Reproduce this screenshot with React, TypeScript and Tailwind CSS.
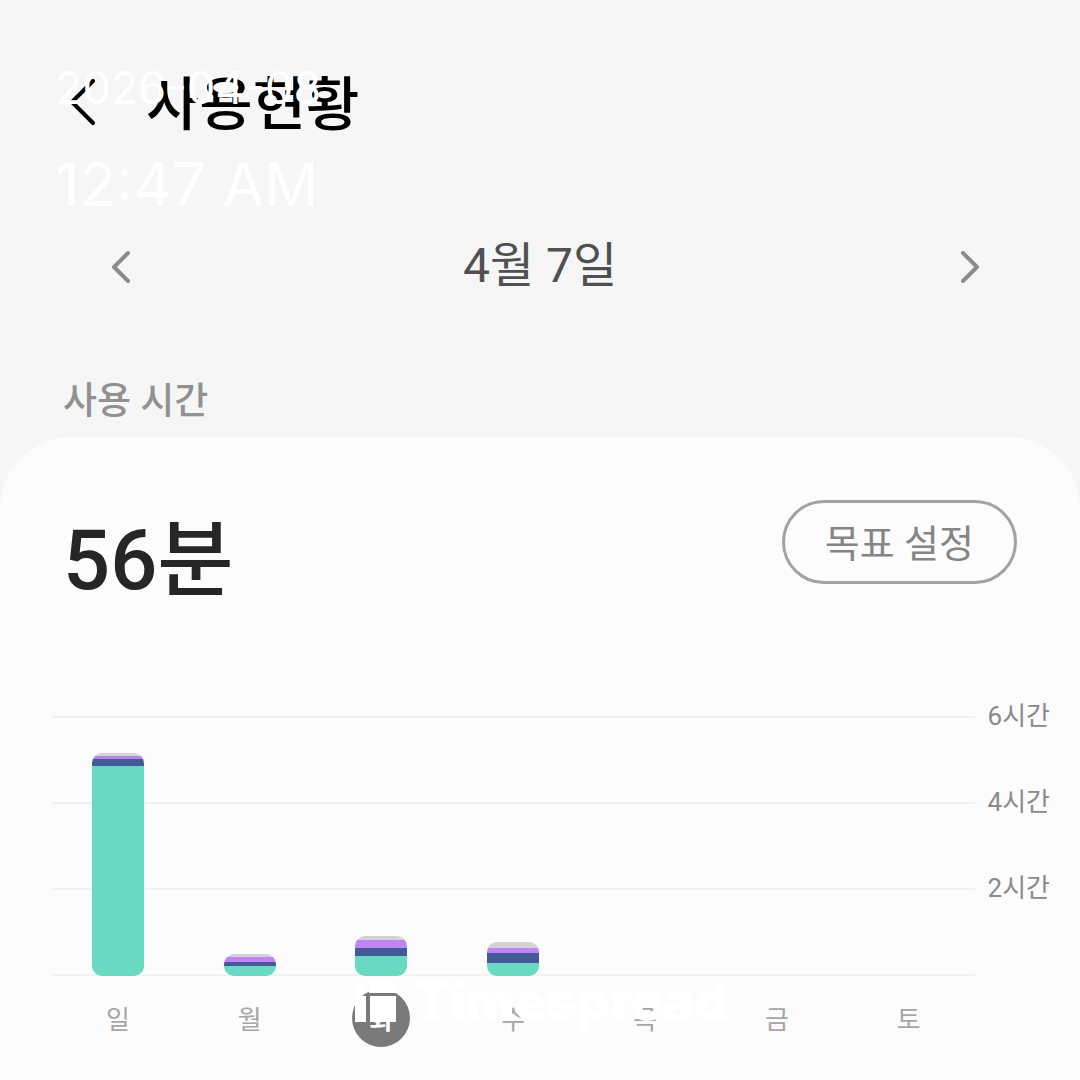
import React from 'react'

/* ── Chart data (segment heights in px, 43px per hour) ── */
type Segment = { size: number; className: string }
type Day = { label: string; segments: Segment[]; selected?: boolean }

const days: Day[] = [
  {
    label: '일',
    segments: [
      { size: 3, className: 'bg-[#d9d3dd]' },
      { size: 3, className: 'bg-[#b088dd]' },
      { size: 7, className: 'bg-[#425a98]' },
      { size: 210, className: 'bg-[#69d9c1]' },
    ],
  },
  {
    label: '월',
    segments: [
      { size: 3, className: 'bg-[#d3d3d3]' },
      { size: 5, className: 'bg-[#c084f5]' },
      { size: 4, className: 'bg-[#425a98]' },
      { size: 10, className: 'bg-[#69d9c1]' },
    ],
  },
  {
    label: '화',
    selected: true,
    segments: [
      { size: 4, className: 'bg-[#d3d3d3]' },
      { size: 8, className: 'bg-[#c084f5]' },
      { size: 8, className: 'bg-[#425a98]' },
      { size: 20, className: 'bg-[#69d9c1]' },
    ],
  },
  {
    label: '수',
    segments: [
      { size: 6, className: 'bg-[#d3d3d3]' },
      { size: 5, className: 'bg-[#c084f5]' },
      { size: 10, className: 'bg-[#425a98]' },
      { size: 13, className: 'bg-[#69d9c1]' },
    ],
  },
  { label: '목', segments: [] },
  { label: '금', segments: [] },
  { label: '토', segments: [] },
]

const hourLabels = ['6시간', '4시간', '2시간']

function Chevron({ points, className }: { points: string; className: string }) {
  return (
    <svg
      viewBox="0 0 32 52"
      className={className}
      fill="none"
      stroke="currentColor"
      strokeWidth={4}
      strokeLinecap="round"
      strokeLinejoin="round"
    >
      <polyline points={points} />
    </svg>
  )
}

/* ── Top bar ── */
function Header() {
  return (
    <header className="flex items-center gap-[50px] px-16 pt-16">
      <button type="button" aria-label="뒤로" className="text-black">
        <Chevron points="29,2 8,23 29,44" className="h-[52px] w-8" />
      </button>
      <h1 className="text-[58px] leading-[82px] font-medium text-black">사용현황</h1>
    </header>
  )
}

function DateNav() {
  return (
    <nav className="mt-[90px] flex items-center justify-between px-[99px]">
      <button type="button" aria-label="이전 날짜" className="text-[#8c8c8c]">
        <Chevron points="29,13 15,27 29,41" className="h-[52px] w-8" />
      </button>
      <p className="text-5xl leading-[60px] text-[#505050]">4월 7일</p>
      <button type="button" aria-label="다음 날짜" className="text-[#8c8c8c]">
        <Chevron points="14,13 28,27 14,41" className="h-[52px] w-8" />
      </button>
    </nav>
  )
}

/* ── Weekly chart ── */
function Bar({ segments }: { segments: Segment[] }) {
  return (
    <div className="w-[52px] overflow-hidden rounded-[10px]">
      {segments.map((s, i) => (
        <div key={i} className={s.className} style={{ height: s.size }} />
      ))}
    </div>
  )
}

function WeekChart() {
  return (
    <div className="mt-[73px] flex pr-[30px] pl-[52px]">
      <div className="flex-1">
        <div className="grid">
          <div className="col-start-1 row-start-1 mt-[26px]">
            {hourLabels.map((h) => (
              <div key={h} className="h-[86px] border-t-2 border-[#f1f1f1]" />
            ))}
            <div className="border-t-2 border-[#f1f1f1]" />
          </div>
          <div className="col-start-1 row-start-1 flex items-end">
            {days.map((d) => (
              <div key={d.label} className="flex flex-1 justify-center">
                <Bar segments={d.segments} />
              </div>
            ))}
          </div>
        </div>
        <div className="mt-[13px] flex">
          {days.map((d) => (
            <div key={d.label} className="flex flex-1 justify-center">
              <button
                type="button"
                className={
                  d.selected
                    ? 'size-[58px] rounded-full bg-[#7a7a7a] pt-1 text-[26px] font-bold text-white'
                    : 'size-[58px] pt-1 text-[26px] text-[#a6a6a6]'
                }
              >
                {d.label}
              </button>
            </div>
          ))}
        </div>
      </div>
      <div className="ml-[13px] text-[26px] leading-[52px] text-[#8a8a8a]">
        {hourLabels.map((h) => (
          <div key={h} className="h-[86px]">
            {h}
          </div>
        ))}
      </div>
    </div>
  )
}

/* ── Stamps over the page ── */
function TimeStamp() {
  return (
    <div className="pointer-events-none absolute top-[60px] left-[55px] font-['Inter',sans-serif] text-white">
      <p className="text-[45px] leading-[56px]">2026-04-08</p>
      <p className="mt-[30px] text-[60px] leading-[76px]">12:47 AM</p>
    </div>
  )
}

function BrandMark() {
  return (
    <div className="pointer-events-none absolute inset-x-0 top-[972px] flex items-center justify-center gap-[18px] text-white">
      <svg viewBox="0 0 44 44" className="size-11" fill="currentColor">
        <circle cx="8" cy="7" r="6" />
        <path d="M17 1h27v12H17zM3 16h11v26H3zM18 16h26v26H18z" />
      </svg>
      <span className="font-['Inter',sans-serif] text-[52px] leading-[60px] font-black">Timespread</span>
    </div>
  )
}

export default function App() {
  return (
    <div className="relative flex min-h-screen flex-col bg-[#f6f6f6] font-['Roboto','Noto_Sans_CJK_KR',sans-serif]">
      <Header />
      <DateNav />
      <h2 className="mt-[76px] px-[63px] text-[37px] leading-[60px] font-medium text-[#919191]">사용 시간</h2>
      <main className="mt-[5px] flex-1 rounded-t-[72px] bg-[#fcfcfc]">
        <div className="flex items-start justify-between px-[63px] pt-[63px]">
          <p className="mt-[5px] text-[83px] leading-[112px] font-medium text-[#262626]">56분</p>
          <button
            type="button"
            className="h-[84px] rounded-full border-[3px] border-[#a2a2a2] px-10 pt-1 text-[38px] text-[#858585]"
          >
            목표 설정
          </button>
        </div>
        <WeekChart />
      </main>
      <TimeStamp />
      <BrandMark />
    </div>
  )
}
